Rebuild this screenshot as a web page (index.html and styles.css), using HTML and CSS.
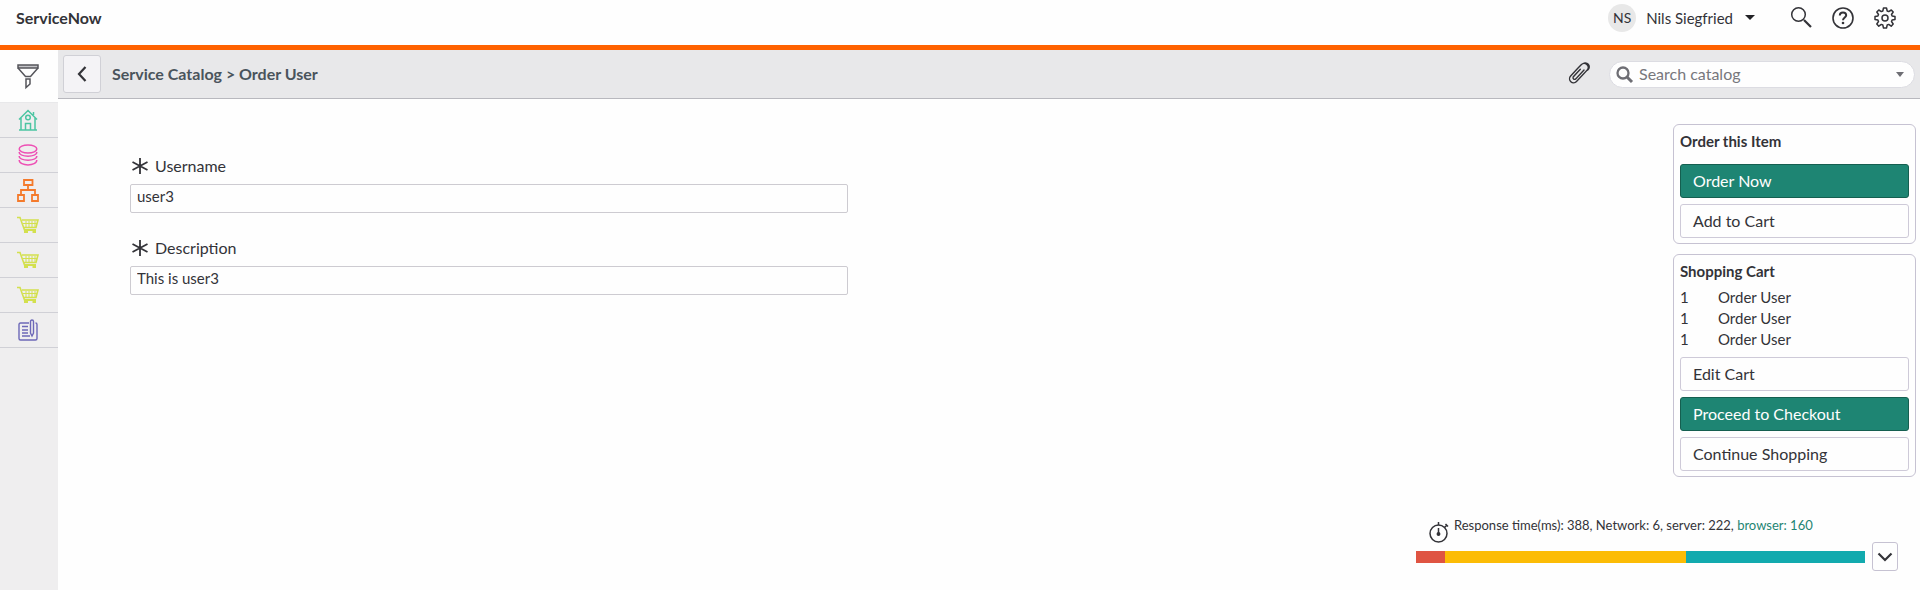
FILE: index.html
```html
<!DOCTYPE html>
<html lang="en">
<head>
<meta charset="utf-8">
<title>ServiceNow - Order User</title>
<link rel="stylesheet" href="styles.css">
</head>
<body>
<svg class="defs" aria-hidden="true">
  <symbol id="cart" viewBox="0 0 22 18">
    <path d="M0 1.500H3L7.500 14H19M5 4H21L19 11.500H6.500" fill="none" stroke="currentColor" stroke-width="1.600"/>
    <path d="M6 7.500H20M9 5V11M12 5V11M15 5V11M18 5V11" fill="none" stroke="currentColor" stroke-width="1"/>
    <path d="M7 13H19V17H15.500V15H11V17H7Z" fill="currentColor"/>
  </symbol>
  <symbol id="asterisk" viewBox="0 0 16 16">
    <path d="M8 0V16M.5 4L15.500 12M15.500 4L.5 12" fill="none" stroke="currentColor" stroke-width="1.800"/>
  </symbol>
</svg>

<header class="topbar">
  <h1 class="brand">ServiceNow</h1>
  <button class="user" type="button">
    <span class="avatar">NS</span>
    <span class="user-name">Nils Siegfried</span>
    <span class="caret"></span>
  </button>
  <div class="tools">
    <button class="icon-button" type="button" aria-label="Search">
      <svg width="22" height="22" viewBox="0 0 22 22" fill="none" stroke="currentColor"><circle cx="8.500" cy="7.500" r="6.800" stroke-width="1.500"/><path d="M14 13L21 20" stroke-width="2.200"/></svg>
    </button>
    <button class="icon-button" type="button" aria-label="Help">
      <svg width="22" height="22" viewBox="0 0 22 22" fill="none" stroke="currentColor"><circle cx="11" cy="11" r="10" stroke-width="1.600"/><path d="M7.800 8.500Q7.800 5.500 11 5.500T14.200 8.300C14.200 10.500 11 10.500 11 13.300" stroke-width="2"/><circle cx="11" cy="16" r="1.300" fill="currentColor" stroke="none"/></svg>
    </button>
    <button class="icon-button" type="button" aria-label="Settings">
      <svg width="22" height="22" viewBox="0 0 22 22" fill="none" stroke="currentColor" stroke-width="1.500" stroke-linejoin="round"><path d="M9.500 1H12.500L13.200 4L14.700 4.600L17.300 3L19.200 5L17.500 7.500L18.100 9L21 9.600V12.400L18.100 13L17.500 14.500L19.200 17L17.200 19.200L14.700 17.400L13.200 18L12.500 21H9.500L8.800 18L7.300 17.400L4.800 19.200L2.800 17L4.500 14.500L3.900 13L1 12.400V9.600L3.900 9L4.500 7.500L2.800 5L4.800 3L7.300 4.600L8.800 4Z"/><circle cx="11" cy="11" r="3"/></svg>
    </button>
  </div>
</header>

<div class="layout">
  <nav class="sidebar" aria-label="Navigator">
    <a class="nav-item nav-filter" href="#filter" aria-label="Filter">
      <svg width="22" height="25" viewBox="0 0 22 25" fill="none" stroke="currentColor" stroke-width="1.500"><path fill="#c4c4c8" d="M1 1H21V4H1Z"/><path d="M1 4L8.500 12.500H13.500L21 4M9 15H13V20L9 23.500Z"/></svg>
    </a>
    <a class="nav-item nav-home" href="#home" aria-label="Home">
      <svg width="20" height="22" viewBox="0 0 20 22" fill="none" stroke="currentColor" stroke-width="1.500"><path d="M1 10.500L10 1.500L19 10.500M3 9V21H17V9M1 21H19M7.500 21V14.500H12.500V21M15.500 6V3"/><circle cx="10" cy="8.500" r="2.300"/></svg>
    </a>
    <a class="nav-item nav-data" href="#data" aria-label="Data">
      <svg width="20" height="22" viewBox="0 0 20 22" fill="none" stroke="currentColor" stroke-width="1.500"><ellipse cx="10" cy="5" rx="8.800" ry="4"/><path d="M1.200 8C1.200 13.500 18.800 13.500 18.800 8M1.200 12C1.200 17.500 18.800 17.500 18.800 12M1.200 16C1.200 22.500 18.800 22.500 18.800 16"/></svg>
    </a>
    <a class="nav-item nav-flow" href="#structure" aria-label="Structure">
      <svg width="22" height="23" viewBox="0 0 22 23" fill="none" stroke="currentColor" stroke-width="1.800"><path d="M7 1H15.500V6H7ZM1 16H7V22H1ZM15 16H21V22H15ZM11 6V11M4 16V11H18V16"/></svg>
    </a>
    <a class="nav-item nav-cart" href="#catalog" aria-label="Catalog"><svg width="22" height="18"><use href="#cart"/></svg></a>
    <a class="nav-item nav-cart" href="#requests" aria-label="Requests"><svg width="22" height="18"><use href="#cart"/></svg></a>
    <a class="nav-item nav-cart" href="#orders" aria-label="Orders"><svg width="22" height="18"><use href="#cart"/></svg></a>
    <a class="nav-item nav-news" href="#news" aria-label="News">
      <svg width="20" height="22" viewBox="0 0 20 22" fill="none" stroke="currentColor" stroke-width="1.400"><path d="M11 4H2.500Q1 4 1 5.500V19.500Q1 21 2.500 21H17.500Q19 21 19 19.500V5.500Q19 4 17.500 4M4 7.500H10M4 11H10M4 14H10M4 17H12"/><path d="M12.500 2.500Q12.500 1 14 1T15.500 2.500V14L14 17L12.500 14Z"/></svg>
    </a>
  </nav>

  <main class="content">
    <div class="toolbar">
      <button class="back" type="button" aria-label="Back">
        <svg width="10" height="16" viewBox="0 0 10 16" fill="none" stroke="currentColor" stroke-width="2.200"><path d="M8.500 1L2 8L8.500 15"/></svg>
      </button>
      <h2 class="crumbs">Service Catalog &gt; Order User</h2>
      <button class="icon-button" type="button" aria-label="Attachments">
        <svg width="22" height="22" viewBox="0 0 22 22" fill="none" stroke="currentColor" stroke-width="1.400" stroke-linecap="round"><g transform="rotate(43 11 11)"><path d="M7 7V17.500A4 4 0 0 0 15 17.500V2.500A3.500 3.500 0 0 0 8 -1M7 7V2A4 4 0 0 1 15 2M9.500 6V16.500A1.700 1.700 0 0 0 12.700 16.500V4"/></g></svg>
      </button>
      <form class="search">
        <svg width="17" height="17" viewBox="0 0 17 17" fill="none" stroke="currentColor"><circle cx="7" cy="7" r="5.500" stroke-width="2.300"/><path d="M11 11L16 16" stroke-width="3"/></svg>
        <input type="search" placeholder="Search catalog" aria-label="Search catalog">
        <button class="search-menu" type="button" aria-label="Recent searches"><span class="caret caret-small"></span></button>
      </form>
    </div>

    <div class="body">
      <form class="fields">
        <div class="field">
          <label for="username"><svg width="16" height="16"><use href="#asterisk"/></svg>Username</label>
          <input id="username" type="text" value="user3">
        </div>
        <div class="field">
          <label for="description"><svg width="16" height="16"><use href="#asterisk"/></svg>Description</label>
          <input id="description" type="text" value="This is user3">
        </div>
      </form>

      <aside class="side">
        <section class="panel">
          <h3>Order this Item</h3>
          <div class="actions">
            <button class="action primary" type="button">Order Now</button>
            <button class="action" type="button">Add to Cart</button>
          </div>
        </section>
        <section class="panel">
          <h3 class="cart-title">Shopping Cart</h3>
          <table class="cart">
            <tr><td class="qty">1</td><td>Order User</td></tr>
            <tr><td class="qty">1</td><td>Order User</td></tr>
            <tr><td class="qty">1</td><td>Order User</td></tr>
          </table>
          <div class="actions">
            <button class="action" type="button">Edit Cart</button>
            <button class="action primary" type="button">Proceed to Checkout</button>
            <button class="action" type="button">Continue Shopping</button>
          </div>
        </section>
      </aside>
    </div>

    <footer class="timing">
      <div class="timing-main">
        <div class="timing-head">
          <svg width="20" height="22" viewBox="0 0 20 22" fill="none" stroke="currentColor" stroke-width="1.500"><circle cx="9.500" cy="12.500" r="8.500"/><path d="M9.500 1V4M15.500 6.500L18 4M16.500 3L19 5.500M9.500 7V13"/><circle cx="9.500" cy="13" r="1.200" fill="currentColor"/></svg>
          <p>Response time(ms): 388, Network: 6, server: 222, <a href="#browser">browser: 160</a></p>
        </div>
        <div class="bar"><span class="network"></span><span class="server"></span><span class="browser"></span></div>
      </div>
      <button class="expand" type="button" aria-label="Toggle response time details">
        <svg width="16" height="10" viewBox="0 0 16 10" fill="none" stroke="currentColor" stroke-width="2.200"><path d="M1.500 1.500L8 8L14.500 1.500"/></svg>
      </button>
    </footer>
  </main>
</div>
</body>
</html>
```
FILE: styles.css
```css
* { box-sizing: border-box; }

body {
  margin: 0;
  min-height: 100vh;
  display: flex;
  flex-direction: column;
  background: #fefefe;
  color: #333338;
  font: 16px/20px Lato, "Noto Sans", sans-serif;
}

h1, h2, h3, p { margin: 0; }
svg { display: block; flex: none; overflow: visible; }
button, input { font: inherit; color: inherit; }
button { padding: 0; border: 0; background: none; cursor: pointer; }
.defs { position: absolute; width: 0; height: 0; }

/* Top bar */
.topbar {
  display: flex;
  align-items: center;
  height: 50px;
  padding: 0 24px 10px 16px;
  border-bottom: 5px solid #ff6200;
}
.brand {
  margin-right: auto;
  font-size: 16px;
  font-weight: 700;
}
.user { display: flex; align-items: center; }
.avatar {
  width: 28px;
  height: 28px;
  margin-right: 10px;
  border-radius: 50%;
  background: #e8e8e8;
  font-size: 14px;
  line-height: 28px;
}
.user-name { font-size: 15px; }
.caret {
  margin-left: 12px;
  border: 5px solid transparent;
  border-top-color: #222226;
  border-bottom: 0;
}
.tools {
  display: flex;
  gap: 20px;
  margin-left: 35px;
}

.layout { flex: 1; display: flex; }

/* Navigator */
.sidebar {
  flex: none;
  width: 58px;
  background: #efeeef;
}
.nav-item {
  display: flex;
  align-items: center;
  justify-content: center;
  height: 35px;
  padding-right: 2px;
  border-bottom: 1px solid #d0d0d6;
}
.nav-filter {
  height: 53px;
  background: #fefefe;
  color: #55555b;
  border-color: #e8e8ea;
}
.nav-home { color: #4cc5a2; }
.nav-data { color: #ed50b4; }
.nav-flow { color: #f47a2c; }
.nav-cart { color: #d3e04e; }
.nav-news { color: #6d68b8; }

.content {
  flex: 1;
  min-width: 0;
  display: flex;
  flex-direction: column;
}

/* Catalog toolbar */
.toolbar {
  display: flex;
  align-items: center;
  height: 49px;
  padding: 0 5px;
  background: #e8e8ea;
  border-bottom: 1px solid #b8b8be;
}
.back {
  display: flex;
  align-items: center;
  justify-content: center;
  width: 38px;
  height: 38px;
  margin-right: 11px;
  border: 1px solid #d0d0d6;
  border-radius: 3px;
  background: #f4f3f6;
}
.crumbs {
  margin-right: auto;
  color: #4a545c;
  font-size: 16px;
  font-weight: 700;
}
.search {
  display: flex;
  align-items: center;
  width: 306px;
  height: 27px;
  margin-left: 20px;
  padding: 0 10px 0 6px;
  border: 1px solid #dcdce2;
  border-radius: 14px;
  background: #fefefe;
  color: #6e6e74;
}
.search input {
  flex: 1;
  min-width: 0;
  padding: 0 0 0 6px;
  border: 0;
  background: none;
  outline: 0;
}
.search input::placeholder { color: #77777c; opacity: 1; }
.caret-small {
  display: block;
  margin: 0;
  border-width: 5px 4px 0;
  border-top-color: #6e6e74;
}

/* Item form and order panels */
.body {
  flex: 1;
  display: flex;
  justify-content: space-between;
  gap: 24px;
  padding: 25px 4px 0 72px;
}
.fields {
  flex: 1;
  display: flex;
  flex-direction: column;
  gap: 25px;
  max-width: 718px;
  padding-top: 32px;
}
.field {
  display: flex;
  flex-direction: column;
  gap: 8px;
}
.field label {
  display: flex;
  align-items: center;
  gap: 7px;
  padding-left: 2px;
}
.field input {
  height: 29px;
  padding: 0 6px 5px;
  border: 1px solid #cdcbd1;
  border-radius: 2px;
  background: #fefefe;
  font-size: 15px;
}
.side {
  flex: none;
  width: 243px;
  display: flex;
  flex-direction: column;
  gap: 10px;
}
.panel {
  padding: 6px 6px 5px;
  border: 1px solid #c6c2d2;
  border-radius: 6px;
}
.panel h3 {
  margin-bottom: 13px;
  font-size: 15px;
  font-weight: 700;
}
.panel .cart-title { margin-bottom: 6px; }
.cart {
  margin-bottom: 7px;
  border-collapse: collapse;
  font-size: 15px;
  line-height: 21px;
}
.cart td { padding: 0; }
.cart .qty { width: 38px; }
.actions {
  display: flex;
  flex-direction: column;
  gap: 6px;
}
.action {
  height: 34px;
  padding: 0 12px;
  border: 1px solid #cecad8;
  border-radius: 3px;
  background: #fefefe;
  text-align: left;
}
.primary {
  border-color: #155f50;
  background: #1e8573;
  color: #fefefe;
}

/* Response time */
.timing {
  display: flex;
  align-items: flex-end;
  justify-content: flex-end;
  gap: 7px;
  padding: 0 22px 19px;
}
.timing-main { width: 449px; padding-bottom: 8px; }
.timing-head {
  display: flex;
  gap: 5px;
  align-items: flex-end;
  margin-bottom: 8px;
  padding-left: 13px;
  font-size: 13px;
}
.timing-head p { padding-bottom: 8px; }
.timing a { color: #1e8573; text-decoration: none; }
.bar { display: flex; height: 12px; }
.network { flex: 29; background: #df5442; }
.server { flex: 241; background: #fcbc05; }
.browser { flex: 179; background: #12aaae; }
.expand {
  display: flex;
  align-items: center;
  justify-content: center;
  width: 26px;
  height: 29px;
  border: 1px solid #c6c2d2;
  border-radius: 3px;
}
```
